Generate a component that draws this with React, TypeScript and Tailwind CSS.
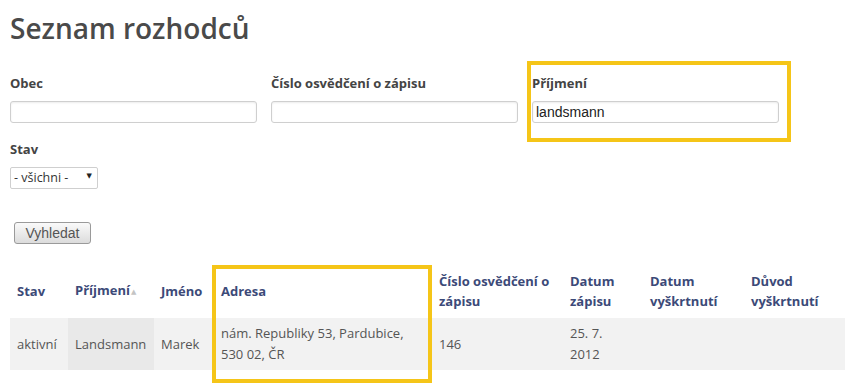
const headCls = "px-[7px] pt-[1px] pb-[6px] align-middle text-left font-bold text-[#3c4a78] leading-[20px]";
const cellCls = "px-[7px] py-[5px] align-middle leading-[21px]";

const Field = ({ label, value }: { label: string; value?: string }) => (
  <div className="flex flex-col">
    <label className="text-[13px] font-bold leading-[18px] text-[#444]">{label}</label>
    <input
      readOnly
      value={value ?? ""}
      className="mt-[9px] h-[22px] w-[247px] rounded-[3px] border border-[#cfcfcf] bg-white px-[3px] text-[14px] text-[#222] shadow-[inset_0_1px_2px_rgba(0,0,0,0.08)] outline-none"
      style={{ fontFamily: '"Liberation Sans", Arial, sans-serif' }}
    />
  </div>
);

export default function App() {
  return (
    <div
      className="relative h-[389px] w-[858px] overflow-hidden bg-white px-[10px] pt-[8px] text-[#444]"
      style={{ fontFamily: '"Open Sans", "DejaVu Sans", sans-serif' }}
    >
      <h1 className="text-[28px] font-semibold leading-[40px] text-[#4a4a4a]">Seznam rozhodců</h1>

      <div className="mt-[26px] flex gap-[14px]">
        <Field label="Obec" />
        <Field label="Číslo osvědčení o zápisu" />
        <Field label="Příjmení" value="landsmann" />
      </div>

      <div className="mt-[17px] flex flex-col">
        <label className="text-[13px] font-bold leading-[18px] text-[#444]">Stav</label>
        <div className="relative mt-[6px] h-[22px] w-[88px]">
          <select className="h-full w-full appearance-none rounded-[2px] border border-[#cfcfcf] bg-white pl-[3px] text-[12.5px] text-[#333] outline-none">
            <option>- všichni -</option>
          </select>
          <span className="pointer-events-none absolute right-[6px] top-[8px] text-[7px] leading-none text-[#222]">▼</span>
        </div>
      </div>

      <button
        className="ml-[4px] mt-[36px] h-[22px] w-[77px] rounded-[3px] border border-[#9a9a9a] bg-gradient-to-b from-[#fafafa] to-[#dcdcdc] text-[14px] text-[#555]"
        style={{ fontFamily: '"Liberation Sans", Arial, sans-serif' }}
      >
        Vyhledat
      </button>

      <table className="mt-[25px] w-[835px] table-fixed border-collapse text-[13px]">
        <colgroup>
          <col className="w-[58px]" />
          <col className="w-[86px]" />
          <col className="w-[60px]" />
          <col className="w-[218px]" />
          <col className="w-[131px]" />
          <col className="w-[80px]" />
          <col className="w-[101px]" />
          <col className="w-[101px]" />
        </colgroup>
        <thead>
          <tr className="h-[49px]">
            <th className={headCls}>Stav</th>
            <th className={headCls}>
              Příjmení<span className="ml-[1px] align-middle text-[7px] text-[#c4c4c4]">▲</span>
            </th>
            <th className={headCls}>Jméno</th>
            <th className={headCls}>Adresa</th>
            <th className={headCls}>Číslo osvědčení o zápisu</th>
            <th className={headCls}>Datum zápisu</th>
            <th className={headCls}>Datum vyškrtnutí</th>
            <th className={headCls}>Důvod vyškrtnutí</th>
          </tr>
        </thead>
        <tbody>
          <tr className="bg-[#f2f2f2] text-[#555]">
            <td className={cellCls}>aktivní</td>
            <td className={`${cellCls} bg-[#e9e9e9]`}>Landsmann</td>
            <td className={cellCls}>Marek</td>
            <td className={cellCls}>nám. Republiky 53, Pardubice, 530 02, ČR</td>
            <td className={cellCls}>146</td>
            <td className={cellCls}>
              25. 7.
              <br />
              2012
            </td>
            <td className={cellCls}></td>
            <td className={cellCls}></td>
          </tr>
        </tbody>
      </table>

      {/* highlight annotations */}
      <div className="pointer-events-none absolute left-[527px] top-[61px] h-[81px] w-[264px] border-[4px] border-[#f5c518]" />
      <div className="pointer-events-none absolute left-[212px] top-[265px] h-[118px] w-[220px] border-[4px] border-[#f5c518]" />
    </div>
  );
}
